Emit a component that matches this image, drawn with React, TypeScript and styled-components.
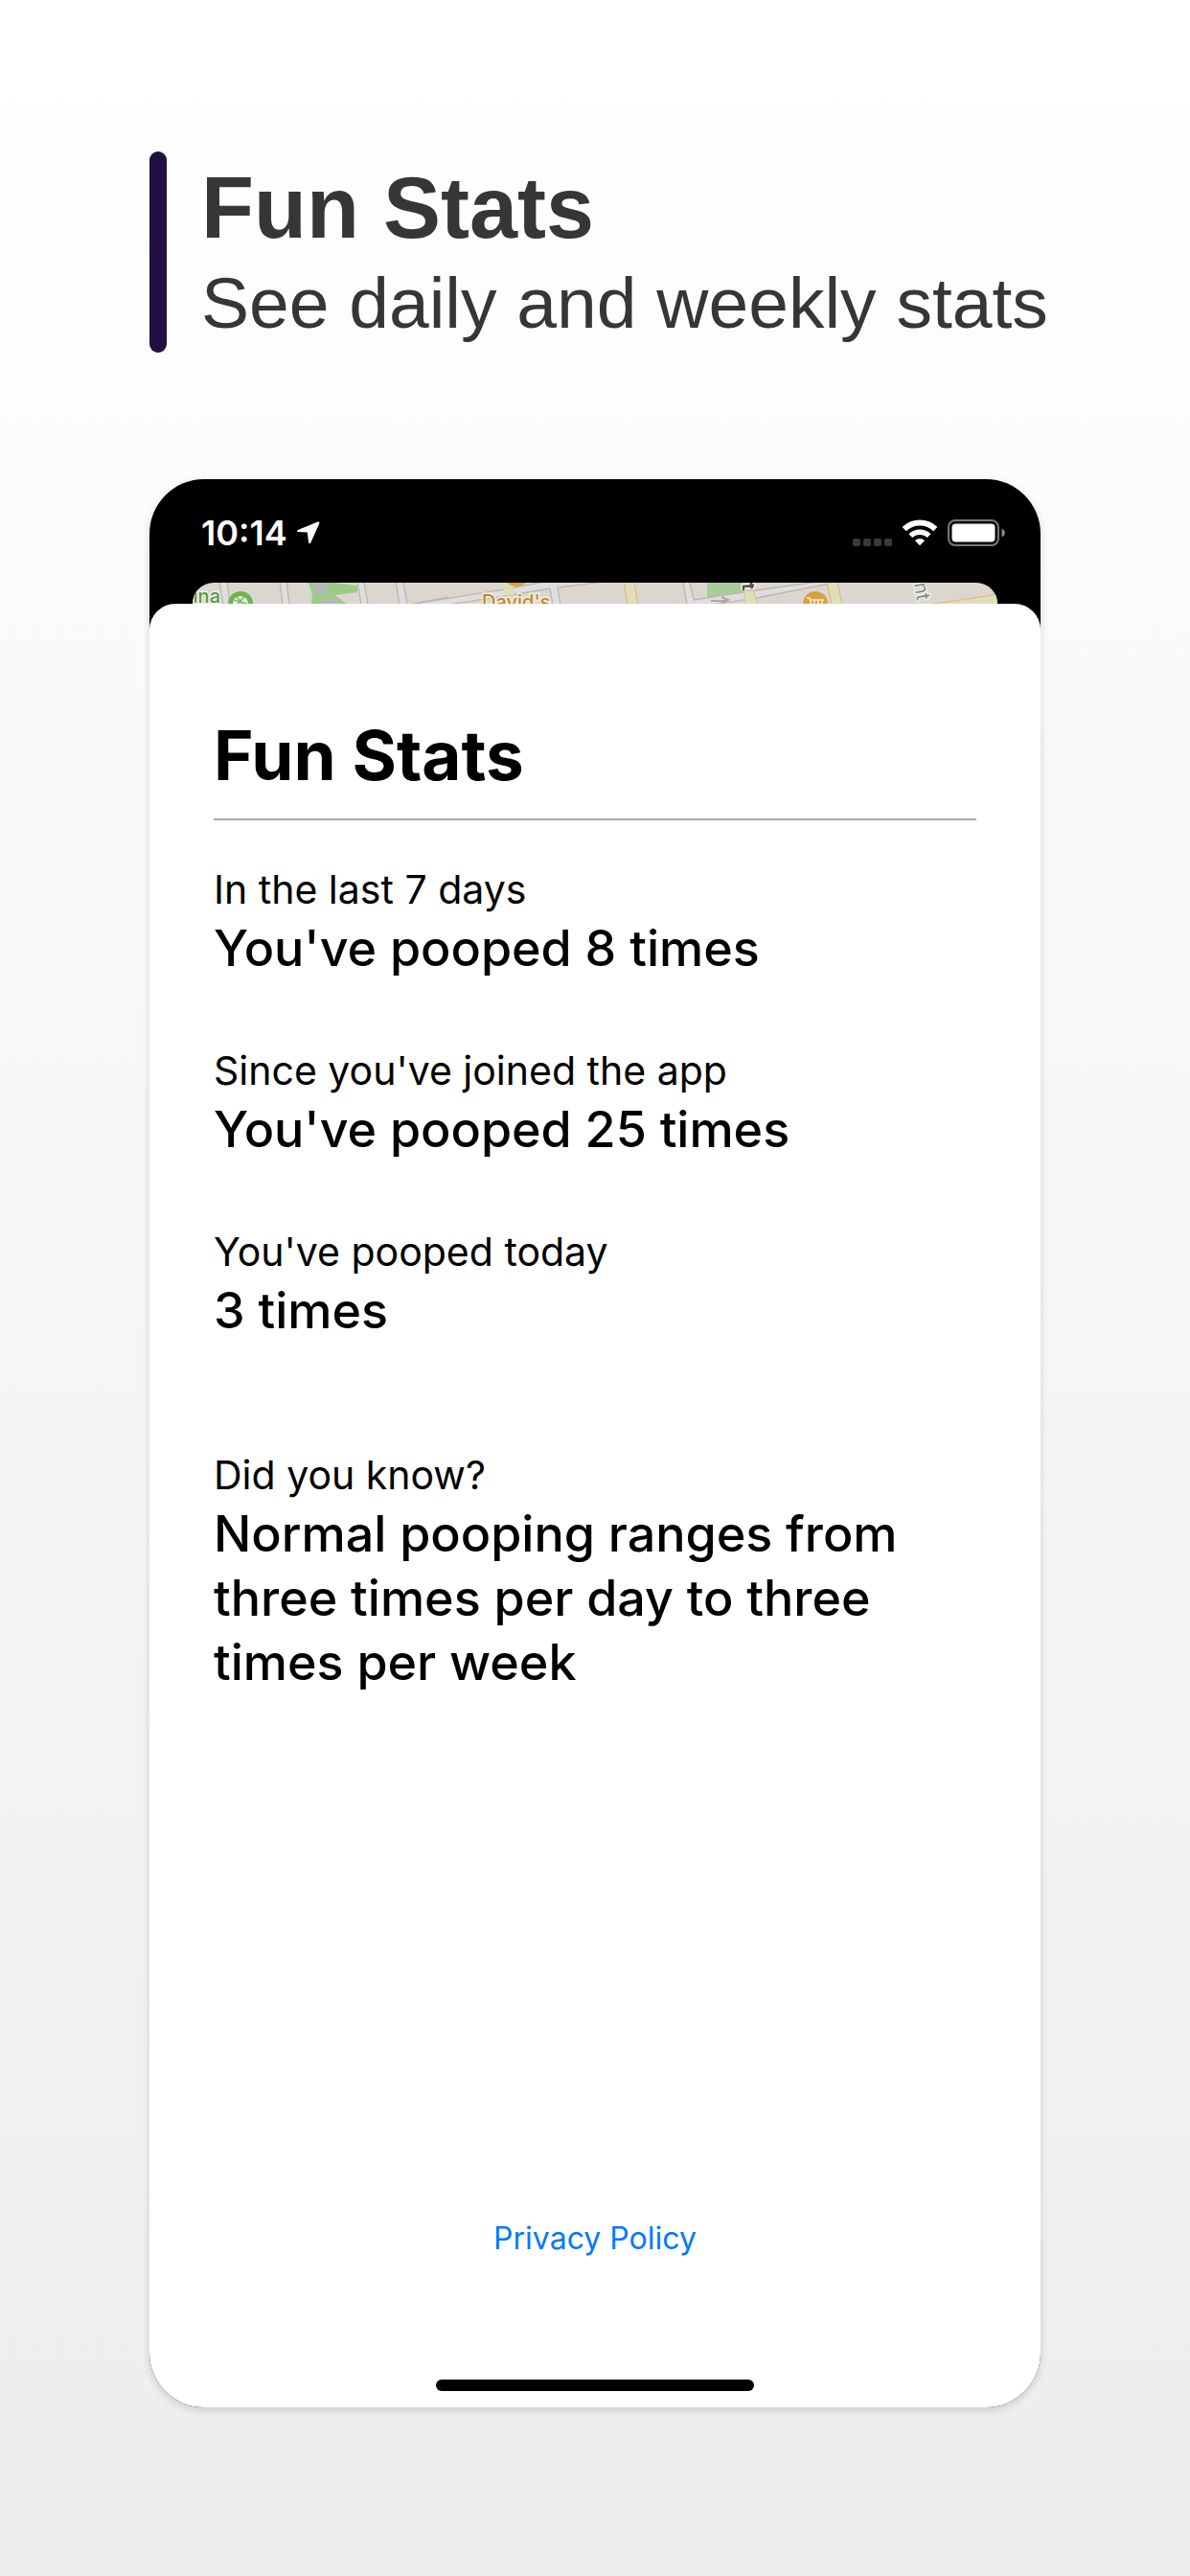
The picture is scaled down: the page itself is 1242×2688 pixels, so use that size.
import React from "react";
import styled, { createGlobalStyle } from "styled-components";

const GlobalStyle = createGlobalStyle`
  * { box-sizing: border-box; }
  body { margin: 0; }
  h1, h2, p, dl, dt, dd { margin: 0; font-weight: inherit; }
`;

const uiFont = `Inter, Roboto, "Liberation Sans", sans-serif`;
const promoFont = `"Liberation Sans", Arial, sans-serif`;

const Page = styled.div`
  display: flex;
  flex-direction: column;
  gap: 132px;
  min-height: 100vh;
  padding: 158px 156px 176px;
  background: linear-gradient(#ffffff, #ededed);
`;

const Promo = styled.header`
  display: flex;
  gap: 36px;
  color: #363636;
  font-family: ${promoFont};
  white-space: nowrap;
`;

const AccentBar = styled.span`
  flex: none;
  width: 18px;
  border-radius: 9px;
  background: #211143;
`;

const PromoText = styled.div`
  padding: 8px 0 4px;
`;

const PromoTitle = styled.h1`
  font-size: 90px;
  font-weight: 700;
  line-height: 102px;
`;

const PromoSubtitle = styled.p`
  font-size: 75px;
  line-height: 96px;
`;

const Phone = styled.main`
  flex: 1;
  display: flex;
  flex-direction: column;
  overflow: hidden;
  border-radius: 57px;
  background: #000;
  box-shadow: 0 3px 8px rgba(0, 0, 0, 0.15);
  font-family: ${uiFont};
`;

const StatusBar = styled.div`
  display: flex;
  align-items: center;
  justify-content: space-between;
  height: 108px;
  padding: 4px 36px 0 54px;
  color: #fff;
`;

const StatusGroup = styled.div<{ $gap: number }>`
  display: flex;
  align-items: center;
  gap: ${(p) => p.$gap}px;
`;

const Clock = styled.time`
  font-size: 36px;
  font-weight: 600;
  line-height: 44px;
`;

const SignalDots = styled.span`
  display: flex;
  align-self: flex-end;
  gap: 3px;
`;

const Dot = styled.i`
  width: 8px;
  height: 8px;
  border-radius: 2px;
  background: #3a3a3a;
`;

const MapPeek = styled.div`
  height: 22px;
  margin: 0 45px;
  overflow: hidden;
  border-radius: 22px 22px 0 0;
  background: #dbd7d0;

  svg { display: block; width: 100%; height: 22px; }
`;

const Sheet = styled.section`
  flex: 1;
  display: flex;
  flex-direction: column;
  padding: 114px 67px 17px;
  border-radius: 27px 27px 0 0;
  background: #fff;
  color: #000;
`;

const SheetTitle = styled.h2`
  padding-bottom: 22px;
  border-bottom: 2px solid #aaa;
  font-size: 71px;
  font-weight: 700;
  line-height: 88px;
`;

const StatList = styled.dl`
  display: flex;
  flex-direction: column;
  gap: 66px;
  padding-top: 44px;
`;

const Stat = styled.div<{ $spaced?: boolean }>`
  padding-top: ${(p) => (p.$spaced ? 44 : 0)}px;
`;

const StatLabel = styled.dt`
  font-size: 41px;
  line-height: 56px;
`;

const StatValue = styled.dd`
  font-size: 52px;
  font-weight: 500;
  line-height: 67px;
`;

const Footer = styled.footer`
  display: flex;
  flex-direction: column;
  align-items: center;
  gap: 125px;
  margin-top: auto;
`;

const PolicyLink = styled.a`
  color: #007aff;
  font-size: 32px;
  line-height: 44px;
  text-decoration: none;
`;

const HomeIndicator = styled.span`
  width: 332px;
  height: 12px;
  border-radius: 6px;
  background: #000;
`;

const LocationArrow = () => (
  <svg width="24" height="24" viewBox="0 0 24 24" fill="#fff" aria-hidden="true">
    <path d="M21.6.6.9 9.1c-1.2.6-.9 1.9.3 2l9.6.5 1.2 10.5c.2 1.3 1.6 1.5 2.2.3L23.3 2.2C23.8 1 22.8.1 21.6.6Z" />
  </svg>
);

const WifiIcon = () => (
  <svg width="36" height="28" viewBox="0 0 36 28" fill="none" stroke="#fff" aria-hidden="true">
    <path d="M1.7 10.1A23.5 23.5 0 0 1 34.3 10.1" strokeWidth="6" />
    <path d="M8.4 17.1A13.8 13.8 0 0 1 27.6 17.1" strokeWidth="5.4" />
    <path d="M18 27.2 12.9 22A7.2 7.2 0 0 1 23.1 22Z" fill="#fff" stroke="none" />
  </svg>
);

const BatteryIcon = () => (
  <svg width="61" height="28" viewBox="0 0 61 28" aria-hidden="true">
    <rect x="1" y="1" width="52" height="26" rx="7" fill="none" stroke="#777" strokeWidth="2" />
    <rect x="4.5" y="4.5" width="45" height="19" rx="4" fill="#fff" />
    <path d="M56.5 9.5c4.5 2 4.5 7 0 9Z" fill="#888" />
  </svg>
);

const MapDrawing = () => (
  <svg viewBox="0 0 840 22" preserveAspectRatio="xMinYMin slice" fontFamily={uiFont} aria-hidden="true">
    <g fill="#9bcb87">
      <path d="M121 0H146L172 3V10L148 13 161 22H124L125 12Z" />
      <path d="M537 0H574L576 10 537 17Z" fill="#a9cd98" />
    </g>
    <g fill="#b5b9b5">
      <path d="M126 0H141L140 12H127Z" />
      <path d="M135 17H151L154 22H132Z" />
    </g>
    <g fill="#dedee0" stroke="#bfb5ad" strokeWidth="1.3">
      <path d="M28-1H36L39 23H32Z" />
      <path d="M91-1H98L101 23H94Z" />
      <path d="M172-1H179L183 23H176Z" />
      <path d="M212-1H220L224 23H216Z" />
      <path d="M225 23 267 15" fill="none" />
      <path d="M232 22 325 7 378-3H446L381 5 384 23H376L373 6 327 14 258 24Z" />
      <path d="M512-1H519L523 18 588 8 660-2H680L588 16 522 26 516 23Z" />
    </g>
    <g fill="#dfdeba" stroke="#e5b78c" strokeWidth="1.3">
      <path d="M322-1H333L336 13 327 14Z" stroke="none" />
      <path d="M450-1H461L465 23H454Z" />
      <path d="M576 9 585 8 590 23H577Z" stroke="#dfc79b" />
      <path d="M662-1H673L678 23H667Z" />
      <path d="M768 23 841 12V24Z" />
    </g>
    <path d="M541 19H558M552 15 559 18 552 21" fill="none" stroke="#a8a8a8" strokeWidth="2" />
    <path d="M575 8V4L585 3M582 0 585 3 583 6" fill="none" stroke="#fff" strokeWidth="5" />
    <path d="M575 8V4L585 3M582 0 585 3 583 6" fill="none" stroke="#555" strokeWidth="2.5" />
    <circle cx="50" cy="22" r="13" fill="#6fb351" />
    <circle cx="50" cy="22" r="8" fill="#e4eedc" />
    <path d="M43 18 57 22M46 15 54 24M54 15 47 22" stroke="#6fb351" strokeWidth="1.3" />
    <circle cx="338" cy="-9" r="13" fill="#dba03a" />
    <circle cx="650" cy="22" r="13" fill="#dba03a" />
    <path d="M641 16H644L646 24H658M645 18H658L656 23H646M649 18V23M653 18V23" fill="none" stroke="#f8edda" strokeWidth="1.5" />
    <g fontSize="20" fontWeight="500" stroke="#eeece8" strokeWidth="3" paintOrder="stroke">
      <text x="29" y="21" textAnchor="end" fill="#579b3b">ina</text>
      <text x="302" y="27" fill="#c6871c">David's</text>
      <text x="0" y="0" transform="translate(753 1) rotate(80)" fill="#888" fontWeight="400">nt</text>
    </g>
  </svg>
);

const stats = [
  { label: "In the last 7 days", value: "You've pooped 8 times" },
  { label: "Since you've joined the app", value: "You've pooped 25 times" },
  { label: "You've pooped today", value: "3 times" },
  {
    label: "Did you know?",
    value: "Normal pooping ranges from three times per day to three times per week",
    spaced: true,
  },
];

export default function App() {
  return (
    <>
      <GlobalStyle />
      <Page>
        <Promo>
          <AccentBar />
          <PromoText>
            <PromoTitle>Fun Stats</PromoTitle>
            <PromoSubtitle>See daily and weekly stats</PromoSubtitle>
          </PromoText>
        </Promo>
        <Phone>
          <StatusBar>
            <StatusGroup $gap={10}>
              <Clock>10:14</Clock>
              <LocationArrow />
            </StatusGroup>
            <StatusGroup $gap={11}>
              <SignalDots>
                <Dot />
                <Dot />
                <Dot />
                <Dot />
              </SignalDots>
              <WifiIcon />
              <BatteryIcon />
            </StatusGroup>
          </StatusBar>
          <MapPeek>
            <MapDrawing />
          </MapPeek>
          <Sheet>
            <SheetTitle>Fun Stats</SheetTitle>
            <StatList>
              {stats.map((s) => (
                <Stat key={s.label} $spaced={s.spaced}>
                  <StatLabel>{s.label}</StatLabel>
                  <StatValue>{s.value}</StatValue>
                </Stat>
              ))}
            </StatList>
            <Footer>
              <PolicyLink href="#privacy">Privacy Policy</PolicyLink>
              <HomeIndicator />
            </Footer>
          </Sheet>
        </Phone>
      </Page>
    </>
  );
}
